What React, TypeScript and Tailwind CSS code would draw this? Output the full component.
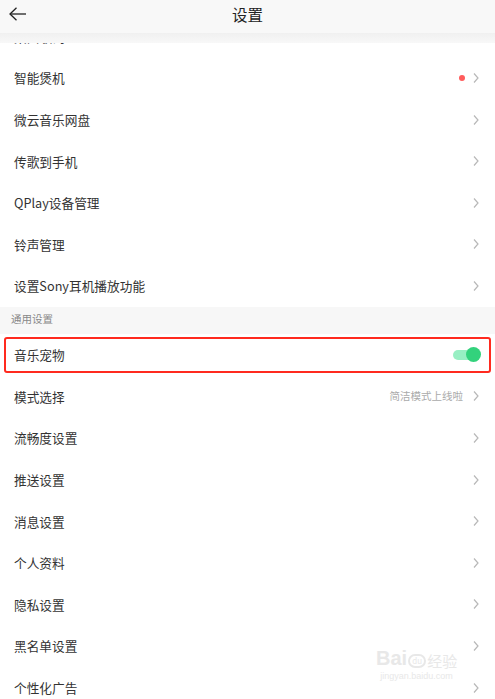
import React from "react";

const font = { fontFamily: '"Noto Sans CJK SC", "Noto Sans", sans-serif' };

function Chevron() {
  return (
    <svg width="8" height="12" viewBox="0 0 8 12" className="shrink-0">
      <polyline points="2,1.5 6,6 2,10.5" fill="none" stroke="#b8b8b8" strokeWidth="1.2" />
    </svg>
  );
}

function Row({ label, right, dot }: { label: string; right?: string; dot?: boolean }) {
  return (
    <div className="h-[41.6px] flex items-center pl-[14px] pr-[15px] bg-white">
      <span className="text-[12.7px] text-[#333] flex-1">{label}</span>
      {right && <span className="text-[10.5px] text-[#aaa] mr-[9px]">{right}</span>}
      {dot && <span className="w-[6px] h-[6px] rounded-full bg-[#ff5c5c] mr-[7px]" />}
      <Chevron />
    </div>
  );
}

export default function App() {
  return (
    <div className="w-[495px] h-[699px] bg-white overflow-hidden relative" style={font}>
      <div className="h-[33px] bg-[#f8f8f8] flex items-center relative z-20">
        <svg width="18" height="14" viewBox="0 0 18 14" className="absolute left-[9px] top-[7px]">
          <line x1="1" y1="7" x2="17" y2="7" stroke="#222" strokeWidth="1.3" />
          <polyline points="7.5,0.8 1,7 7.5,13.2" fill="none" stroke="#222" strokeWidth="1.3" />
        </svg>
        <span className="w-full text-center text-[15.5px] text-[#222] -mt-[4px]">设置</span>
      </div>
      <div className="relative flex flex-col">
        <div className="absolute inset-x-0 top-0 h-[10px] bg-gradient-to-b from-[#f0f0f0] to-[#f8f8f8] z-10" />
        <div className="-mt-[17.4px] flex flex-col">
          <Row label="桌面歌词" right="未开启桌面歌词" />
          <Row label="智能煲机" dot />
          <Row label="微云音乐网盘" />
          <Row label="传歌到手机" />
          <Row label="QPlay设备管理" />
          <Row label="铃声管理" />
          <Row label="设置Sony耳机播放功能" />
          <div className="h-[27.2px] bg-[#f7f7f7] flex items-center pl-[11px]">
            <span className="text-[10.5px] text-[#888] -mt-[2px]">通用设置</span>
          </div>
          <div className="h-[41.6px] bg-white px-[4px] py-[3px]">
            <div className="h-full border-2 border-[#ff2a1f] rounded-[3px] flex items-center pl-[8px] pr-[8px]">
              <span className="text-[12.7px] text-[#333] flex-1">音乐宠物</span>
              <div className="relative w-[28px] h-[15px] flex items-center">
                <div className="w-[26px] h-[10px] rounded-full bg-[#98efc3]" />
                <div className="absolute right-0 top-0 w-[15px] h-[15px] rounded-full bg-[#33d27c]" />
              </div>
            </div>
          </div>
          <Row label="模式选择" right="简洁模式上线啦" />
          <Row label="流畅度设置" />
          <Row label="推送设置" />
          <Row label="消息设置" />
          <Row label="个人资料" />
          <Row label="隐私设置" />
          <Row label="黑名单设置" />
          <Row label="个性化广告" />
        </div>
      </div>
      <div className="absolute left-[376px] top-[648px] flex flex-col items-center text-[#e8e8e8] pointer-events-none">
        <div className="flex items-end">
          <span className="text-[20px] font-bold leading-none" style={{ fontFamily: '"Liberation Sans", sans-serif' }}>Bai</span>
          <span className="w-[18px] h-[14px] rounded-full border-2 border-[#e8e8e8] text-[8px] leading-[10px] text-center mx-[1px]">du</span>
          <span className="text-[15px] leading-none">经验</span>
        </div>
        <span className="text-[9px] leading-none mt-[4px]" style={{ fontFamily: '"Liberation Sans", sans-serif' }}>jingyan.baidu.com</span>
      </div>
    </div>
  );
}
